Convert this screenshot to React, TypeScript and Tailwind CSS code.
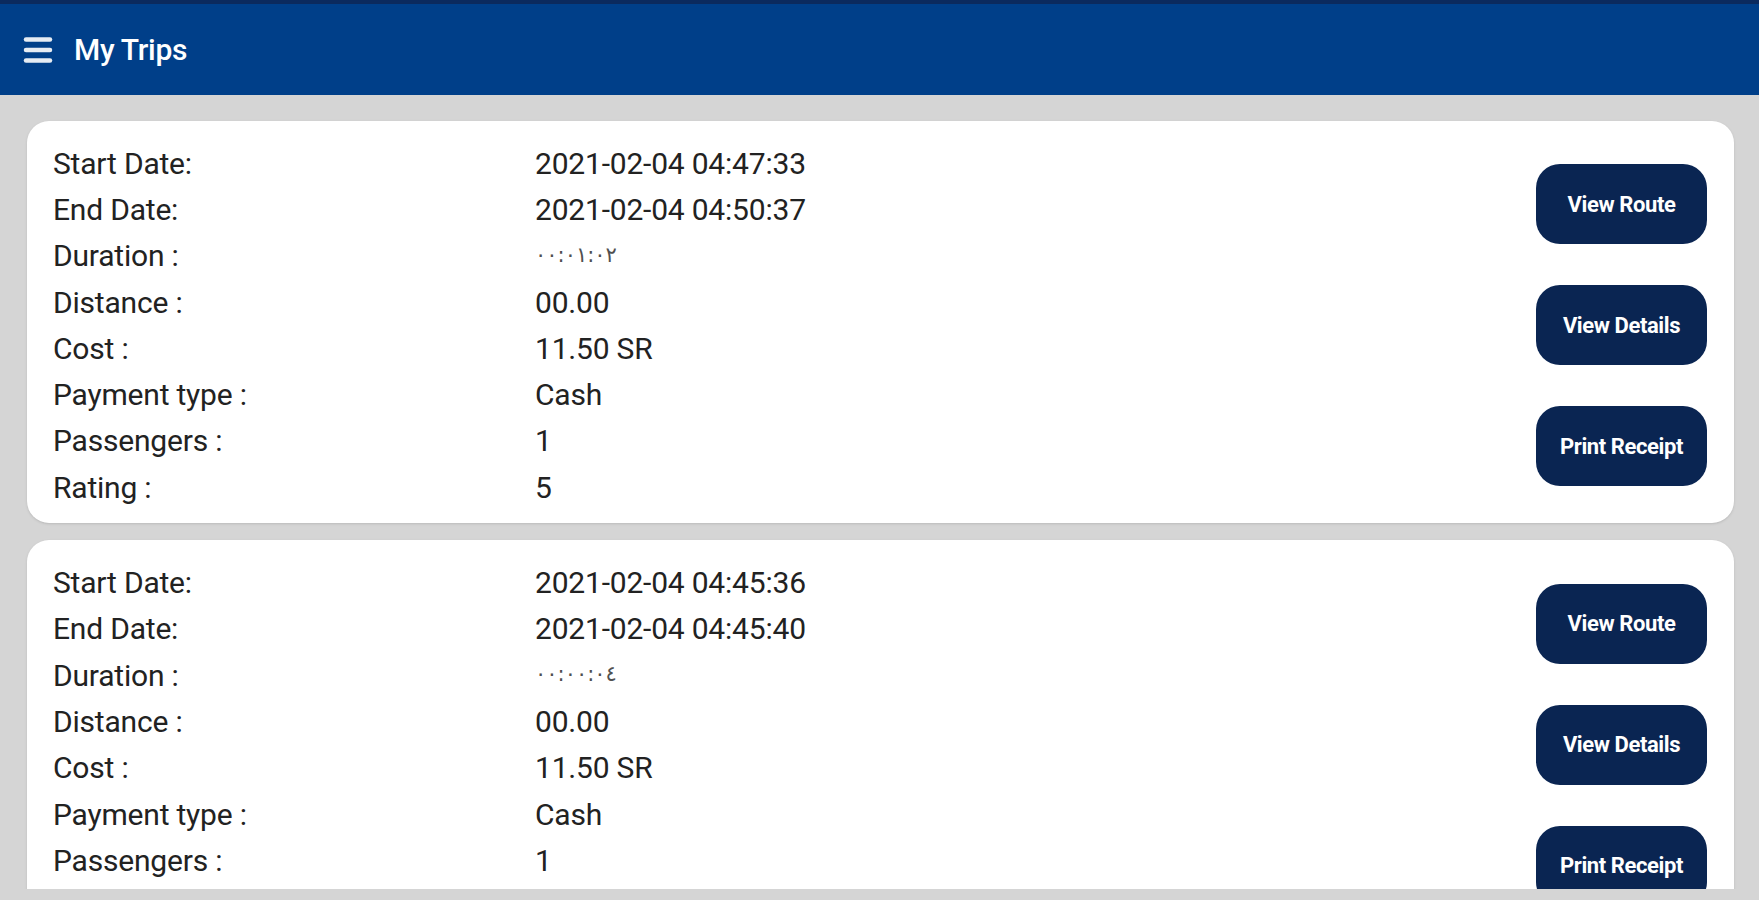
import { Menu } from 'lucide-react';

type Trip = {
  start: string;
  end: string;
  duration: string;
  distance: string;
  cost: string;
  payment: string;
  passengers: string;
  rating: string;
};

const trips: Trip[] = [
  {
    start: '2021-02-04 04:47:33',
    end: '2021-02-04 04:50:37',
    duration: '٠٠:٠١:٠٢',
    distance: '00.00',
    cost: '11.50 SR',
    payment: 'Cash',
    passengers: '1',
    rating: '5',
  },
  {
    start: '2021-02-04 04:45:36',
    end: '2021-02-04 04:45:40',
    duration: '٠٠:٠٠:٠٤',
    distance: '00.00',
    cost: '11.50 SR',
    payment: 'Cash',
    passengers: '1',
    rating: '5',
  },
];

function Row({ label, value, muted }: { label: string; value: string; muted?: boolean }) {
  return (
    <div className="flex h-[46.3px] items-center">
      <span className="w-[482px] shrink-0">{label}</span>
      {muted ? (
        <span className="text-[21px] text-[#505050] [font-family:'DejaVu_Sans',sans-serif]">{value}</span>
      ) : (
        <span>{value}</span>
      )}
    </div>
  );
}

function TripCard({ trip }: { trip: Trip }) {
  return (
    <div className="flex items-center justify-between rounded-[22px] bg-white pb-[13px] pl-[26px] pr-[27px] pt-[19px] shadow-sm">
      <div className="text-[30px] tracking-[-0.2px] text-[#222]">
        <Row label="Start Date:" value={trip.start} />
        <Row label="End Date:" value={trip.end} />
        <Row label="Duration :" value={trip.duration} muted />
        <Row label="Distance :" value={trip.distance} />
        <Row label="Cost :" value={trip.cost} />
        <Row label="Payment type :" value={trip.payment} />
        <Row label="Passengers :" value={trip.passengers} />
        <Row label="Rating :" value={trip.rating} />
      </div>
      <div className="flex flex-col gap-[41px]">
        {['View Route', 'View Details', 'Print Receipt'].map((b) => (
          <button
            key={b}
            className="flex h-[80px] w-[171px] items-center justify-center rounded-[24px] bg-[#0a2552] text-[22px] font-bold tracking-[-0.4px] text-white"
          >
            {b}
          </button>
        ))}
      </div>
    </div>
  );
}

export default function App() {
  return (
    <div className="flex h-screen w-screen flex-col overflow-hidden bg-[#d5d5d5] font-['Roboto',sans-serif]">
      {/* App bar */}
      <header className="flex h-[95px] shrink-0 items-center gap-[18px] border-t-[4px] border-[#0b2a5e] bg-[#003f89] pl-[20px]">
        <Menu size={36} strokeWidth={3} className="text-white/90" />
        <h1 className="text-[30px] font-medium tracking-[-0.3px] text-white">My Trips</h1>
      </header>

      {/* Trip list */}
      <main className="mb-[11px] flex-1 overflow-hidden">
        <div className="space-y-[17px] pl-[27px] pr-[25px] pt-[26px]">
          {trips.map((t, i) => (
            <TripCard key={i} trip={t} />
          ))}
        </div>
      </main>
    </div>
  );
}
